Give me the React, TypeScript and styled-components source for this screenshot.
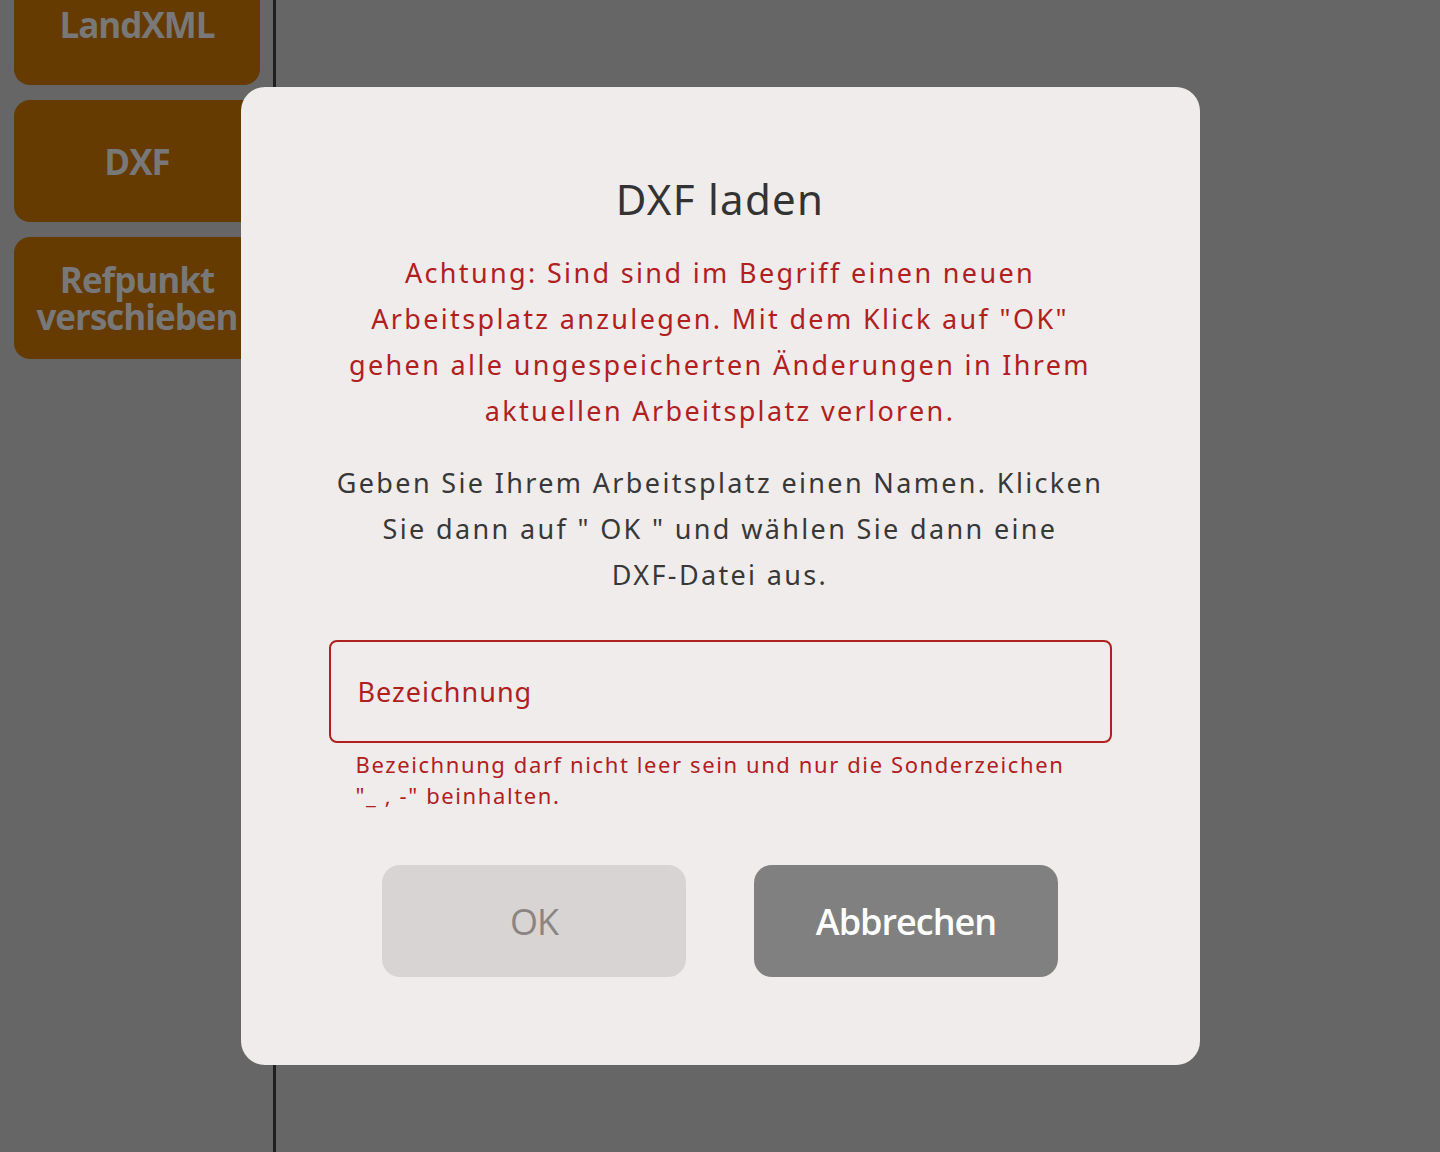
import React from 'react';
import styled, { createGlobalStyle } from 'styled-components';

const Global = createGlobalStyle`
  html, body {
    margin: 0;
    padding: 0;
    background: #666666;
  }
  * {
    box-sizing: border-box;
  }
`;

const Screen = styled.div`
  position: relative;
  width: 1440px;
  height: 1152px;
  overflow: hidden;
  background: #666666;
  display: flex;
`;

const Sidebar = styled.aside`
  width: 276px;
  border-right: 3px solid #1f1f1f;
  display: flex;
  flex-direction: column;
  gap: 15px;
  padding: 0 13px 0 14px;
  margin-top: -37px;
  height: calc(100% + 37px);
`;

const SideButton = styled.div`
  height: 122px;
  border-radius: 16px;
  background: #653b02;
  color: #787878;
  font-family: 'Open Sans', 'Noto Sans', sans-serif;
  font-weight: 700;
  font-size: 35px;
  line-height: 37px;
  letter-spacing: -1px;
  display: flex;
  align-items: center;
  justify-content: center;
  text-align: center;
`;

const Overlay = styled.div`
  position: absolute;
  inset: 0;
  display: flex;
  align-items: center;
  justify-content: center;
`;

const Dialog = styled.div`
  width: 959px;
  height: 978px;
  background: #f0ecec;
  border-radius: 24px;
  padding: 72px 88px 0;
  display: flex;
  flex-direction: column;
  align-items: center;
  font-family: 'Noto Sans', sans-serif;
`;

const Title = styled.h2`
  margin: 0 0 11px;
  font-size: 42px;
  font-weight: 400;
  color: #333333;
  letter-spacing: 1.3px;
  line-height: 80px;
`;

const Text = styled.p<{ $warn?: boolean }>`
  margin: 0 0 26px;
  text-align: center;
  font-size: 27px;
  line-height: 46px;
  letter-spacing: 2.35px;
  color: ${(p) => (p.$warn ? '#b0201f' : '#383838')};
`;

const Field = styled.div`
  width: 100%;
  margin-top: 16px;
`;

const Input = styled.div`
  height: 103px;
  border: 2px solid #b0201f;
  border-radius: 8px;
  padding: 0 27px;
  display: flex;
  align-items: center;
  font-size: 27px;
  color: #b0201f;
  letter-spacing: 1px;
`;

const Hint = styled.div`
  padding: 6px 27px 0;
  font-size: 22px;
  line-height: 31px;
  letter-spacing: 1.6px;
  color: #b0201f;
`;

const Actions = styled.div`
  display: flex;
  gap: 68px;
  margin-top: 54px;
`;

const Button = styled.div<{ $primary?: boolean }>`
  width: 304px;
  height: 112px;
  border-radius: 18px;
  display: flex;
  align-items: center;
  justify-content: center;
  font-family: 'Open Sans', 'Noto Sans', sans-serif;
  font-size: 36px;
  letter-spacing: -1px;
  font-weight: ${(p) => (p.$primary ? 600 : 400)};
  background: ${(p) => (p.$primary ? '#808080' : '#d8d4d4')};
  color: ${(p) => (p.$primary ? '#ffffff' : '#8a8582')};
`;

export default function App() {
  return (
    <Screen>
      <Global />
      <Sidebar>
        <SideButton>LandXML</SideButton>
        <SideButton>DXF</SideButton>
        <SideButton>
          Refpunkt
          <br />
          verschieben
        </SideButton>
      </Sidebar>
      <Overlay>
        <Dialog>
          <Title>DXF laden</Title>
          <Text $warn>
            Achtung: Sind sind im Begriff einen neuen
            <br />
            Arbeitsplatz anzulegen. Mit dem Klick auf "OK"
            <br />
            gehen alle ungespeicherten Änderungen in Ihrem
            <br />
            aktuellen Arbeitsplatz verloren.
          </Text>
          <Text>
            Geben Sie Ihrem Arbeitsplatz einen Namen. Klicken
            <br />
            Sie dann auf " OK " und wählen Sie dann eine
            <br />
            DXF-Datei aus.
          </Text>
          <Field>
            <Input>Bezeichnung</Input>
            <Hint>
              Bezeichnung darf nicht leer sein und nur die Sonderzeichen
              <br />
              "_ , -" beinhalten.
            </Hint>
          </Field>
          <Actions>
            <Button>OK</Button>
            <Button $primary>Abbrechen</Button>
          </Actions>
        </Dialog>
      </Overlay>
    </Screen>
  );
}
